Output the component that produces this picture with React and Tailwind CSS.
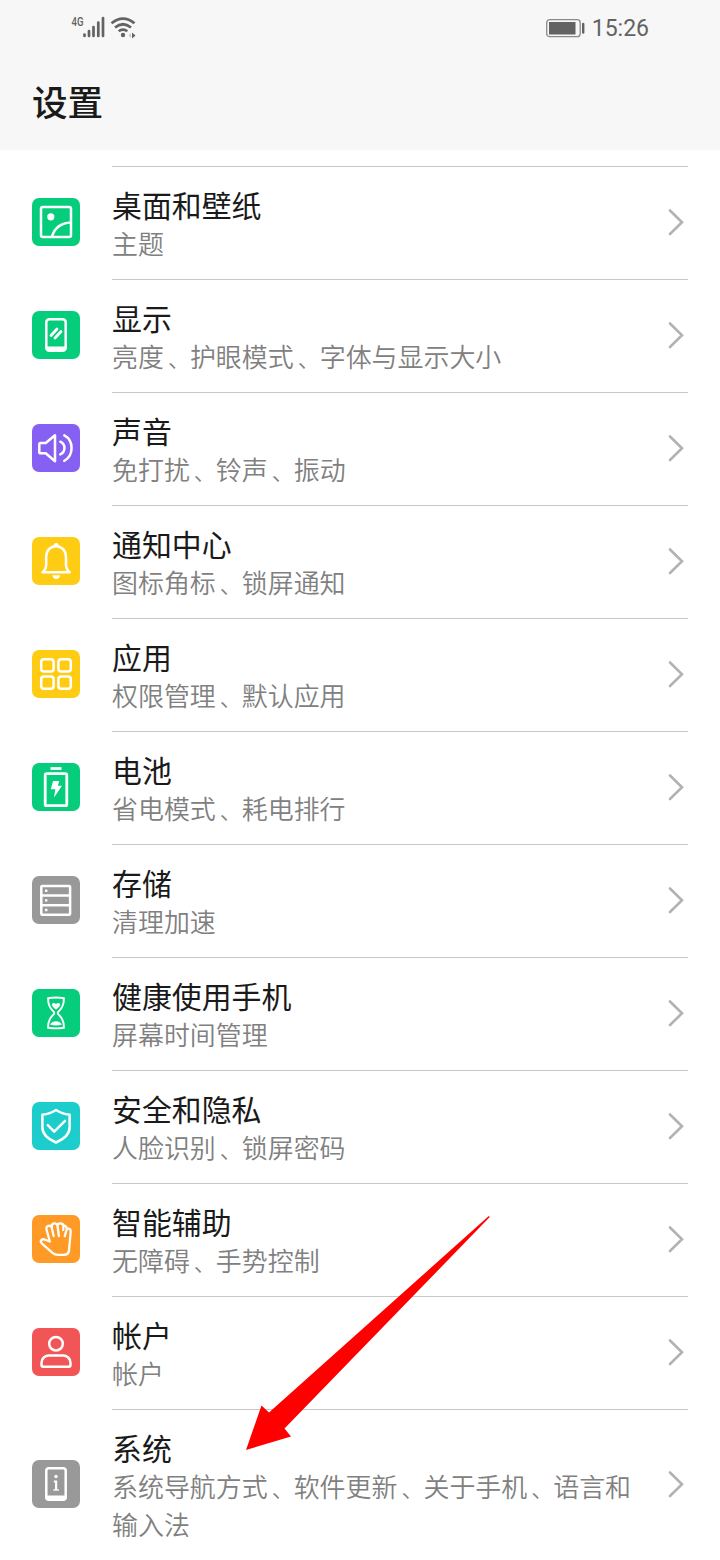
import React from 'react';

const items = [
  {
    title: '桌面和壁纸',
    desc: '主题',
    color: 'bg-[#05cd7b]',
    icon: (
      <>
        <rect x="9" y="9" width="30" height="30" rx="2" />
        <path d="M20 38.5C22.5 30 29 25 39 24.5" />
        <circle cx="18.8" cy="18.8" r="3.6" fill="currentColor" stroke="none" />
      </>
    ),
  },
  {
    title: '显示',
    desc: '亮度、护眼模式、字体与显示大小',
    color: 'bg-[#05cd7b]',
    icon: (
      <>
        <rect x="14.3" y="8.3" width="19.4" height="31.4" rx="3" />
        <path d="M15 37.5h18" strokeWidth="4" />
        <path d="M19 24.5l6-6.5M23 27l6-6.5" strokeWidth="2.8" strokeLinecap="round" />
      </>
    ),
  },
  {
    title: '声音',
    desc: '免打扰、铃声、振动',
    color: 'bg-[#8660f3]',
    icon: (
      <>
        <path d="M8.7 19h5L23 11.2v26L13.7 29.3h-5q-1.4 0-1.4-1.4v-7.5q0-1.4 1.4-1.4z" />
        <path d="M28.3 17.7c5.5 2.5 5.5 10.2 0 12.7M32.3 11.3c9.7 5.2 9.7 20.3 0 25.5" strokeLinecap="round" />
      </>
    ),
  },
  {
    title: '通知中心',
    desc: '图标角标、锁屏通知',
    color: 'bg-[#ffcc14]',
    icon: (
      <>
        <path d="M10.5 35.3c2.6-2 3.7-3.8 3.7-8V20c0-6.5 4.2-10.8 9.8-10.8S34 13.5 34 20v7.3c0 4.2 1 6 3.7 8z" />
        <path d="M21.7 8.5a2.5 2.5 0 0 1 5 0zM20.3 38.3h8c-.7 4.8-7.3 4.8-8 0z" fill="currentColor" stroke="none" />
      </>
    ),
  },
  {
    title: '应用',
    desc: '权限管理、默认应用',
    color: 'bg-[#ffcc14]',
    icon: (
      <>
        <rect x="9.2" y="9.2" width="12.4" height="12.4" rx="2.8" />
        <rect x="26.4" y="9.2" width="12.4" height="12.4" rx="2.8" />
        <rect x="9.2" y="26.4" width="12.4" height="12.4" rx="2.8" />
        <rect x="26.4" y="26.4" width="12.4" height="12.4" rx="2.8" />
      </>
    ),
  },
  {
    title: '电池',
    desc: '省电模式、耗电排行',
    color: 'bg-[#05cd7b]',
    icon: (
      <>
        <rect x="13.2" y="10.7" width="21.6" height="32" rx="1.5" strokeWidth="2.8" />
        <path d="M18.5 5.5h11" strokeWidth="2.8" />
        <path d="M21 18h6.3l-1.5 4.8h4.2L22 34.5l1.3-8.3h-4.5z" fill="currentColor" stroke="none" />
      </>
    ),
  },
  {
    title: '存储',
    desc: '清理加速',
    color: 'bg-[#999999]',
    icon: (
      <>
        <rect x="9.3" y="10" width="28.8" height="28.8" rx="1" />
        <path d="M9.3 19.5h28.8M9.3 29.2h28.8" />
        <path d="M13 14.8h2.4M13 24.4h2.4M13 34h2.4" strokeWidth="2.4" />
      </>
    ),
  },
  {
    title: '健康使用手机',
    desc: '屏幕时间管理',
    color: 'bg-[#05cd7b]',
    icon: (
      <>
        <path
          d="M16 9.2Q24 7.8 32 9.2C32 17 29 20 26.2 22.8Q25.3 24 26.2 25.2C29 28 32 31 32 38.8Q24 40 16 38.8C16 31 19 28 21.8 25.2Q22.7 24 21.8 22.8C19 20 16 17 16 9.2z"
          strokeWidth="1.9"
        />
        <path
          d="M24 20.5c-2.5-1.7-4-3.2-4-4.7 0-2.2 3-2.5 4-.4 1-2.1 4-1.8 4 .4 0 1.5-1.5 3-4 4.7zM18 35.5c1.5-2.3 3.7-3.2 6-3.2s4.5.9 6 3.2q-6 2-12 0z"
          fill="currentColor"
          stroke="none"
        />
      </>
    ),
  },
  {
    title: '安全和隐私',
    desc: '人脸识别、锁屏密码',
    color: 'bg-[#1ccdcb]',
    icon: (
      <>
        <path d="M24 8c4.5 3 9 4.2 13.6 4.7v12.8c0 7-6.6 12-13.6 15-7-3-13.6-8-13.6-15V12.7C15 12.2 19.5 11 24 8z" />
        <path d="M15.8 23.2l6.4 6.4 10.8-10.8" strokeLinecap="round" />
      </>
    ),
  },
  {
    title: '智能辅助',
    desc: '无障碍、手势控制',
    color: 'bg-[#ff9a26]',
    icon: (
      <path
        d="M17.8 26.5L14.5 14.5C13.6 10.7 18.7 9.3 19.8 13L21.7 21M17.8 26.5L12.5 24.5C9.3 23.5 7.5 26.5 10 28.6L20.5 37.8Q23 39.8 26 39.8H32Q36.5 39.8 37 35.5L38.7 17C39 13 34.8 12.5 34.2 16L32.8 21.2M19.9 13L19.8 11.5C19.7 7.5 25 7.3 25.5 11L26.9 21M25.5 10.8C26.3 7.3 32 7.8 31.5 12L31.2 15M31.3 11.8C32.2 9.8 35 10.8 34.7 14"
        strokeWidth="2.3"
        strokeLinecap="round"
      />
    ),
  },
  {
    title: '帐户',
    desc: '帐户',
    color: 'bg-[#f25555]',
    icon: (
      <>
        <circle cx="24" cy="15.7" r="6.8" />
        <path d="M9.5 37v-2.2c0-4.5 3.5-7.3 7.5-7.3h14c4 0 7.5 2.8 7.5 7.3V37q0 1.7-1.7 1.7H11.2q-1.7 0-1.7-1.7z" />
      </>
    ),
  },
  {
    title: '系统',
    desc: '系统导航方式、软件更新、关于手机、语言和输入法',
    color: 'bg-[#999999]',
    icon: (
      <>
        <rect x="14.3" y="8.3" width="19.4" height="31.4" rx="2.5" />
        <path d="M15 37.5h18" strokeWidth="4" />
        <circle cx="24" cy="16.5" r="1.7" fill="currentColor" stroke="none" />
        <path d="M21.8 21.5h2.3v8.5" strokeWidth="2.2" strokeLinejoin="miter" />
        <path d="M21.3 30h5.6" strokeWidth="1.4" />
      </>
    ),
  },
];

const StatusBar = () => (
  <div className="flex h-[56px] items-center justify-between pl-[70px] pr-[71px] text-[#636363]">
    <svg className="h-[30px] w-[70px]" viewBox="0 0 70 30" fill="none" stroke="currentColor">
      <text x="1.5" y="12.8" fontSize="12" fontWeight="500" textLength="12" lengthAdjust="spacingAndGlyphs" fill="currentColor" stroke="none" fontFamily="Roboto, sans-serif">
        4G
      </text>
      <path d="M14.5 23v-1.5M19 23v-5M23.5 23v-9M28.3 23V9.5M33 23V5" strokeWidth="2.7" strokeLinecap="round" />
      <path d="M41.5 10.2Q53 1 64.5 10.2M45 14.5q8-6.5 16 0M48.7 18.3q4.3-3.5 8.6 0" strokeWidth="2.7" />
      <circle cx="53" cy="22" r="2.2" fill="currentColor" stroke="none" />
      <path d="M62 19.5l3.5 3-3.5 3z" fill="currentColor" stroke="none" />
      <path d="M61 20l-2.5 2.5L61 25z" fill="#cccccc" stroke="none" />
    </svg>
    <div className="flex items-center gap-[7px]">
      <svg className="mb-px h-[20px] w-[40px]" viewBox="0 0 40 20" fill="none">
        <rect x="1.7" y="1.7" width="33.5" height="17" rx="3" stroke="#8a8a8a" strokeWidth="1.3" />
        <rect x="4" y="4" width="26.5" height="12.5" fill="currentColor" />
        <path d="M38.2 6v8.5" stroke="currentColor" strokeWidth="2.4" strokeLinecap="round" />
      </svg>
      <span className="pt-[2px] font-['Roboto',sans-serif] text-[23px] leading-[28px]">15:26</span>
    </div>
  </div>
);

// the separator sits closer to the middle of its cell than the font puts it
const Desc = ({ text }) =>
  text.split(/(、)/).map((part, i) =>
    part === '、' ? (
      <span key={i} className="ml-[4px] text-[22px] leading-none">
        {part}
      </span>
    ) : (
      part
    )
  );

const SettingRow = ({ title, desc, color, icon }) => (
  <li className="flex items-center">
    <div className={`mb-px h-12 w-12 shrink-0 rounded-[7px] text-white ${color}`}>
      <svg viewBox="0 0 48 48" fill="none" stroke="currentColor" strokeWidth="2.5" strokeLinejoin="round">
        {icon}
      </svg>
    </div>
    <div className="ml-8 flex flex-1 items-center self-stretch border-t border-[#c8c8c8] pb-[18px] pt-[18px]">
      <div className="w-[530px]">
        <h2 className="mb-px text-[29.9px] leading-[38px] text-[#1a1a1a]">{title}</h2>
        <p className="-mb-px text-[25.95px] font-[350] leading-[38px] text-[#808080]">
          <Desc text={desc} />
        </p>
      </div>
      <svg className="mb-[2px] ml-auto h-8 w-6" viewBox="0 0 24 32" fill="none" stroke="#b2b2b2" strokeWidth="2.6" strokeLinecap="round">
        <path d="M6 4.5l12 11.8L6 28" />
      </svg>
    </div>
  </li>
);

// hand-drawn pointer over the list
const Arrow = () => (
  <svg className="absolute left-[240px] top-[1210px] h-[245px] w-[255px]" viewBox="240 1210 255 245" fill="#ff0000">
    <path d="M488.5 1216.3q1.5-.3 1 1L284.500 1428.500l6.500 8-45 13.500 15.500-44.500 7.500 7z" />
  </svg>
);

const App = () => {
  return (
    <div className="relative h-[1560px] w-[720px] overflow-hidden bg-white font-['Noto_Sans_CJK_SC',sans-serif]" lang="zh-CN">
      <header className="h-[150px] bg-[#f7f7f7]">
        <StatusBar />
        <h1 className="pl-8 pt-[19px] text-[35.6px] font-medium leading-[52px] text-[#1a1a1a]">设置</h1>
      </header>
      <ul className="px-8 pt-4">
        {items.map((item) => (
          <SettingRow key={item.title} {...item} />
        ))}
      </ul>
      <Arrow />
    </div>
  );
};

export default App;
